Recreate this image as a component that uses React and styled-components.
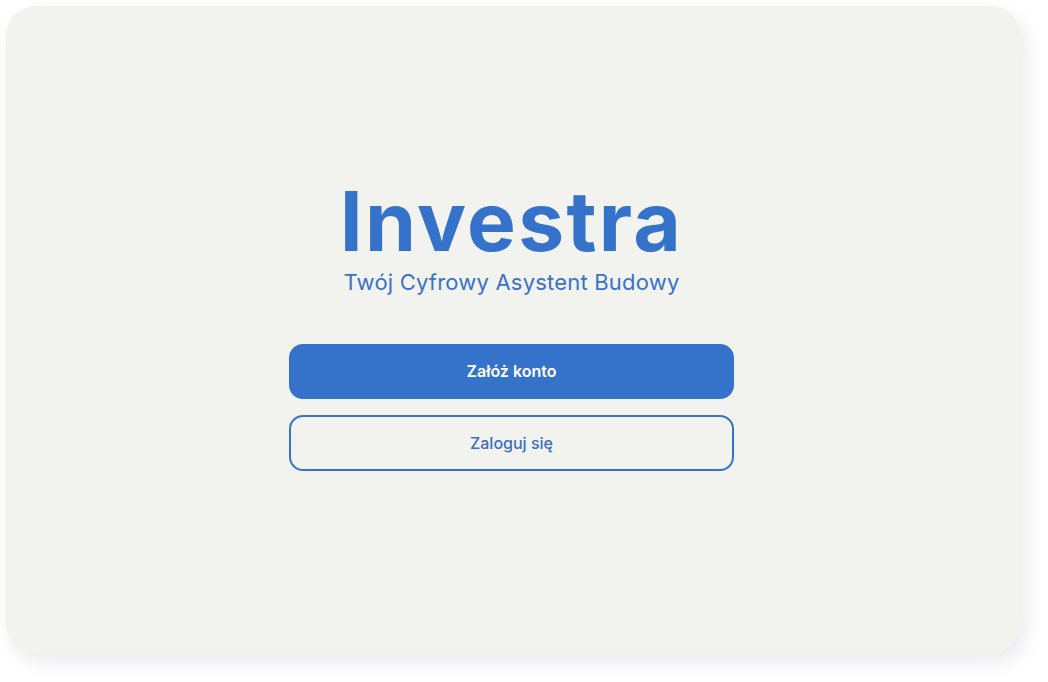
import React from "react";
import styled, { createGlobalStyle } from "styled-components";

const Global = createGlobalStyle`
  html, body { margin: 0; padding: 0; background: #ffffff; }
  body { font-family: "Inter", "Noto Sans", sans-serif; }
`;

const Page = styled.div`
  width: 1048px;
  height: 682px;
  box-sizing: border-box;
  padding: 6px 28px 28px 6px;
`;

const Card = styled.main`
  width: 1014px;
  height: 648px;
  box-sizing: border-box;
  padding: 0 3px 8px 0;
  background: #f2f2ef;
  border-radius: 30px;
  box-shadow: 6px 8px 18px rgba(60, 60, 90, 0.10);
  display: flex;
  flex-direction: column;
  align-items: center;
  justify-content: center;
`;

const Title = styled.h1`
  margin: 0;
  font-family: "Inter", sans-serif;
  font-weight: 700;
  font-size: 82px;
  line-height: 1;
  letter-spacing: 2.3px;
  color: #3572c9;
`;

const Subtitle = styled.p`
  margin: 6px 0 0;
  font-family: "Inter", sans-serif;
  font-weight: 400;
  font-size: 22px;
  line-height: 1.2;
  letter-spacing: 0.2px;
  color: #3a72c8;
`;

const Actions = styled.div`
  margin-top: 48px;
  display: flex;
  flex-direction: column;
  gap: 16px;
`;

const Button = styled.button`
  width: 445px;
  height: 55.5px;
  box-sizing: border-box;
  border-radius: 14px;
  font-family: "Inter", sans-serif;
  font-size: 16px;
  font-weight: ${(p) => (p.$primary ? 600 : 500)};
  color: ${(p) => (p.$primary ? "#ffffff" : "#3a6fc2")};
  background: ${(p) => (p.$primary ? "#3572c9" : "transparent")};
  border: 2px solid ${(p) => (p.$primary ? "#3572c9" : "#3a72c8")};
  cursor: pointer;
`;

export default function App() {
  return (
    <>
      <Global />
      <Page>
        <Card>
          <Title>Investra</Title>
          <Subtitle>Twój Cyfrowy Asystent Budowy</Subtitle>
          <Actions>
            <Button $primary>Załóż konto</Button>
            <Button>Zaloguj się</Button>
          </Actions>
        </Card>
      </Page>
    </>
  );
}
